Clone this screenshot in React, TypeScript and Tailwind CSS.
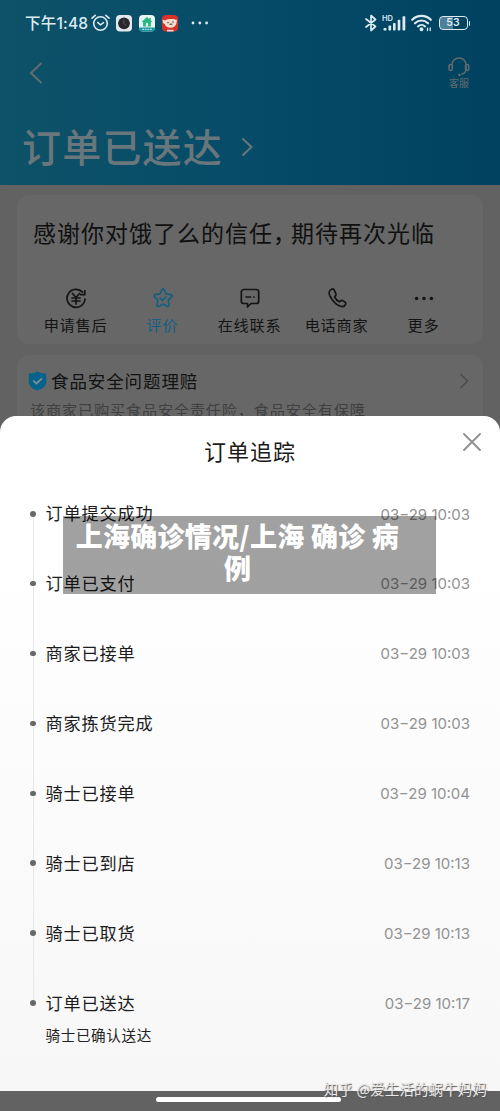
import type { ReactNode } from "react";

type TrackStep = {
    title: string;
    time: string;
    note?: string;
}

const steps: TrackStep[] = [
    { title: "订单提交成功", time: "03−29 10:03" },
    { title: "订单已支付", time: "03−29 10:03" },
    { title: "商家已接单", time: "03−29 10:03" },
    { title: "商家拣货完成", time: "03−29 10:03" },
    { title: "骑士已接单", time: "03−29 10:04" },
    { title: "骑士已到店", time: "03−29 10:13" },
    { title: "骑士已取货", time: "03−29 10:13" },
    { title: "订单已送达", time: "03−29 10:17", note: "骑士已确认送达" },
];

function StatusBar() {
    return (
        <div className="flex h-[46px] items-center pl-[25px] pr-[30px] text-[#dcebf2]">
            <span className="w-[63px] whitespace-nowrap pt-px font-['Inter','Noto_Sans_CJK_SC',sans-serif] text-[15.5px] font-medium leading-none tracking-[0.2px]">下午1:48</span>
            <svg className="ml-[3px]" width="19" height="18" viewBox="0 0 19 18" fill="none" stroke="currentColor" strokeWidth="1.6" strokeLinecap="round">
                <circle cx="9.5" cy="9.5" r="6.8" />
                <path d="M1 4.2 4.2 1.3M18 4.2l-3.2-2.9M6.8 8.6l2.7 2.2 3-2.2" />
            </svg>
            <svg className="ml-[6px]" width="16" height="17" viewBox="0 0 16 17">
                <rect width="16" height="16.5" rx="4" fill="#e4e8ee" />
                <circle cx="8" cy="8.3" r="5.9" fill="#29292d" />
                <path d="M7.8 4.5v4l2.4 2" stroke="#55555a" strokeWidth="1" fill="none" />
            </svg>
            <svg className="ml-[7px]" width="16" height="17" viewBox="0 0 16 17">
                <rect width="16" height="16.5" rx="4" fill="#e7f5f1" />
                <path d="M0 12.5h16a4 4 0 0 1-4 4H4a4 4 0 0 1-4-4z" fill="#1692a0" />
                <path d="M8 2 2.5 7h1.6v4.5h7.8V7h1.6L11.800 5.400V3h-1.500v1.200z" fill="#28b684" />
                <path d="M6.800 11.500V9a1.200 1.200 0 0 1 2.400 0v2.500z" fill="#dff5ee" />
                <path d="M3 14.300h10" stroke="#c5ecec" strokeWidth="1" strokeDasharray="2 .7" />
            </svg>
            <svg className="ml-[7px]" width="16" height="17" viewBox="0 0 16 17">
                <rect width="16" height="16.5" rx="4" fill="#d6322c" />
                <path d="M.5 4.500 3 5.500C4.500 4.300 7 4 9.500 4s3.500.3 4.500 1l1-.5-.6 4c-.8 2.800-3 4.300-6 4.300s-5-1.500-5.500-3.600L1 8z" fill="#f4ddd1" />
                <circle cx="6" cy="7.500" r=".7" fill="#3a2523" />
                <circle cx="11" cy="7" r=".7" fill="#3a2523" />
                <path d="M7.500 9.200h2.800" stroke="#3a2523" strokeWidth="1" />
                <path d="M5 14.800h6.500v1.700H5z" fill="#f6d9d4" />
            </svg>
            <svg className="ml-[13px]" width="18" height="4" viewBox="0 0 18 4" fill="currentColor">
                <circle cx="2" cy="2" r="1.4" />
                <circle cx="8.8" cy="2" r="1.4" />
                <circle cx="15.6" cy="2" r="1.4" />
            </svg>
            <svg className="ml-auto" width="12" height="18" viewBox="0 0 12 18" fill="none" stroke="currentColor" strokeWidth="1.7" strokeLinejoin="round" strokeLinecap="round">
                <path d="m1 5 9.500 7.500L6 16.500v-15l4.500 4L1 13" />
            </svg>
            <svg className="ml-[5px]" width="24" height="18" viewBox="0 0 24 18" fill="currentColor">
                <text x="0" y="6.8" fontSize="7.5" fontWeight="600" fontFamily="Inter, sans-serif">HD</text>
                <rect x="1.5" y="14" width="3" height="2.5" rx=".8" />
                <rect x="6.5" y="11.5" width="2.6" height="5" rx=".8" />
                <rect x="11" y="9" width="2.6" height="7.5" rx=".8" />
                <rect x="15.700" y="5.800" width="2.6" height="10.700" rx=".8" />
                <rect x="20.500" y="2.200" width="2.800" height="14.300" rx=".8" />
            </svg>
            <svg className="ml-[5px]" width="22" height="18" viewBox="0 0 22 18" fill="none" stroke="currentColor" strokeWidth="2.1" strokeLinecap="round">
                <path d="M1.200 5.800c5.200-5.200 13.400-5.200 18.600 0M4 9.300c3.800-3.700 9.200-3.700 13 0M7 12.400c2-1.900 5-1.900 7 0" />
                <circle cx="10.500" cy="15.200" r=".9" fill="currentColor" />
                <path d="M16.500 16.600v-2.400M19.200 14v2.500" strokeWidth="1.300" />
            </svg>
            <div className="ml-[6px] flex items-center">
                <div className="flex h-[14px] w-[29px] items-center justify-center rounded-[4px] border-[1.5px] border-[#dcebf2] bg-linear-to-r from-[#4f7f98] from-50% to-transparent to-50% pt-px font-['Inter',sans-serif] text-[10.5px] font-semibold leading-none">53</div>
                <div className="ml-px h-[5px] w-[1.5px] rounded-r bg-[#dcebf2]" />
            </div>
        </div>
    );
}

function Action({ label, active, children }: { label: string; active?: boolean; children: ReactNode }) {
    return (
        <div className={`flex w-[87px] flex-col items-center ${active ? "text-[#135f84]" : "text-[#141414]"}`}>
            <svg width="22" height="22" viewBox="0 0 22 22" fill="none" stroke="currentColor" strokeWidth="1.7" strokeLinecap="round" strokeLinejoin="round">
                {children}
            </svg>
            <span className="mt-[3px] whitespace-nowrap text-[15.2px] leading-[24px] tracking-[0.7px]">{label}</span>
        </div>
    );
}

function OrderPage() {
    return (
        <div className="h-full bg-[#626262]">
            <header className="h-[185px] bg-linear-to-r from-[#0e5268] via-[#064b68] to-[#004260]">
                <StatusBar />
                <div className="flex h-[54px] items-center justify-between pl-[29px] pr-[30px] text-[#646b6e]">
                    <svg width="14" height="22" viewBox="0 0 14 22" fill="none" stroke="currentColor" strokeWidth="2" strokeLinecap="round">
                        <path d="M12 1.5 2 11l10 9.5" />
                    </svg>
                    <div className="flex w-[22px] flex-col items-center">
                        <svg width="22" height="20" viewBox="0 0 22 20" fill="none" stroke="currentColor" strokeWidth="1.5" strokeLinecap="round">
                            <path d="M4 8C4 3.800 7 1 11 1s7 2.800 7 7v4c0 3.300-1.700 4.500-4 5" />
                            <rect x="1" y="7.5" width="3.3" height="6" rx="1.6" />
                            <rect x="17.5" y="7.5" width="3.3" height="6" rx="1.6" />
                            <circle cx="11.5" cy="18" r=".6" fill="currentColor" />
                        </svg>
                        <span className="whitespace-nowrap text-[10px] leading-[12px]">客服</span>
                    </div>
                </div>
                <div className="flex h-[94px] items-center pl-[22px] text-[#69767b]">
                    <h1 className="mb-[3px] w-[208px] whitespace-nowrap text-[39px] font-medium leading-none tracking-[1.2px]">订单已送达</h1>
                    <svg className="ml-[11px]" width="14" height="20" viewBox="0 0 14 20" fill="none" stroke="currentColor" strokeWidth="2" strokeLinecap="round">
                        <path d="m2 2 8.500 8L2 18" />
                    </svg>
                </div>
            </header>

            <section className="mx-[17px] mt-[10px] h-[149px] rounded-[12px] bg-[#676767]">
                <div className="flex h-[76px] items-center pb-[2px] pl-[16px]">
                    <h2 className="whitespace-nowrap text-[23px] leading-none tracking-[1px] text-[#101010]">感谢你对饿了么的信任<span className="tracking-[-5px]">，</span>期待再次光临</h2>
                </div>
                <div className="ml-[15px] flex pt-[16px]">
                    <Action label="申请售后">
                        <path d="M17.600 5.200A9 9 0 1 0 20 12M19.800 3.500v4.200h-4M7.500 6.500l3.500 4 3.500-4M7 11h8M7 14h8M11 11v6" />
                    </Action>
                    <Action label="评价" active>
                        <path d="M10 2.500c.4-.9 1.600-.9 2 0l2.100 4.400 4.900.8c1 .2 1.300 1.200.7 1.900l-3.500 3.600.8 5c.2 1-.8 1.600-1.600 1.200L11 17.100l-4.400 2.300c-.8.4-1.800-.2-1.600-1.200l.8-5-3.500-3.600c-.6-.7-.3-1.700.7-1.900l4.900-.8zM8 11l2.500 2.300L14 10" />
                    </Action>
                    <Action label="在线联系">
                        <path d="M4.800 2.500h12.400a2.500 2.500 0 0 1 2.500 2.500v9a2.500 2.500 0 0 1-2.500 2.500H12L8.500 20v-3.500H4.800A2.500 2.500 0 0 1 2.300 14V5a2.500 2.500 0 0 1 2.500-2.500zM7 10h4.500M14.800 10h.2" />
                    </Action>
                    <Action label="电话商家">
                        <path d="M5.700 2.200 3.800 3.700c-3 3.300 5.200 14.600 11.700 15.800 2 .3 3.600-.9 4.200-2.300.3-.8 0-1.500-.6-2l-2.500-1.600c-.7-.4-1.400-.3-2 .2l-1.200 1c-2-.9-3.900-3-4.800-5l1.200-1.400c.4-.6.4-1.200 0-1.800L8.100 2.800c-.6-.9-1.600-1.200-2.400-.6z" />
                    </Action>
                    <Action label="更多">
                        <g fill="currentColor" stroke="none">
                            <circle cx="3.6" cy="11.500" r="1.8" />
                            <circle cx="11" cy="11.500" r="1.8" />
                            <circle cx="18.400" cy="11.500" r="1.8" />
                        </g>
                    </Action>
                </div>
            </section>

            <section className="mx-[17px] mt-[11px] h-[90px] rounded-[12px] bg-[#676767] pl-[11px] pr-[14px] pt-[14px]">
                <div className="flex h-[24px] items-center">
                    <svg width="19" height="20" viewBox="0 0 18 20" preserveAspectRatio="none" fill="none">
                        <path d="M9 .5c2.500 1.400 5 2 8.300 2v8c0 4.400-3.300 7.500-8.300 9-5-1.500-8.300-4.600-8.300-9v-8C4 2.500 6.500 1.900 9 .5z" fill="#05638b" />
                        <path d="m5 9.500 3 3 5.300-5.200" stroke="#858e92" strokeWidth="1.7" />
                    </svg>
                    <span className="ml-[4px] whitespace-nowrap text-[17.5px] leading-none tracking-[0.9px] text-[#121212]">食品安全问题理赔</span>
                    <svg className="ml-auto" width="10" height="16" viewBox="0 0 10 16" fill="none" stroke="#4a4a4a" strokeWidth="1.4">
                        <path d="m1.500 1 7 7-7 7" />
                    </svg>
                </div>
                <p className="mt-[5px] whitespace-nowrap pl-[2px] text-[15.2px] leading-[22px] tracking-[0.8px] text-[#404040]">该商家已购买食品安全责任险，食品安全有保障</p>
            </section>
        </div>
    );
}

function Step({ step, last }: { step: TrackStep; last: boolean }) {
    return (
        <li className="flex h-[69.9px]">
            <div className="flex w-[7px] flex-col items-center">
                <div className="mt-[9px] size-[5.5px] shrink-0 rounded-full bg-[#686868]" />
                {!last && <div className="-mb-[9px] w-px grow bg-[#e8e8e8]" />}
            </div>
            <div className="ml-[9px] grow">
                <div className="flex h-[24px] items-center justify-between">
                    <span className="mb-[2px] whitespace-nowrap text-[17.2px] leading-none tracking-[0.8px] text-[#1c1c1c]">{step.title}</span>
                    <span className="whitespace-nowrap font-['Inter',sans-serif] text-[15px] leading-none text-[#929292]">{step.time}</span>
                </div>
                {step.note && <p className="mt-[9px] whitespace-nowrap text-[14.6px] leading-[22px] tracking-[0.6px] text-[#222]">{step.note}</p>}
            </div>
        </li>
    );
}

function TrackingSheet() {
    return (
        <div className="absolute inset-x-0 top-[416px] h-[675px] rounded-t-[16px] bg-linear-to-b from-white from-20% to-[#f7f7f7]">
            <div className="grid h-[71px] grid-cols-[1fr_auto_1fr] items-center">
                <h3 className="col-start-2 mb-[4px] whitespace-nowrap text-[22px] leading-none tracking-[1px] text-[#1a1a1a]">订单追踪</h3>
                <svg className="mb-[20px] mr-[19px] justify-self-end" width="18" height="18" viewBox="0 0 18 18" stroke="#8e8e8e" strokeWidth="1.8" strokeLinecap="round">
                    <path d="m1 1 16 16M17 1 1 17" />
                </svg>
            </div>
            <ul className="pl-[29.5px] pr-[30px] pt-[15px]">
                {steps.map((step, i) => <Step key={step.title} step={step} last={i === steps.length - 1} />)}
            </ul>
        </div>
    );
}

export default function App() {
    return (
        <main className="relative h-[1111px] w-[500px] overflow-hidden bg-[#646464] font-['Noto_Sans_CJK_SC',sans-serif]">
            <OrderPage />
            <TrackingSheet />
            <div className="absolute left-[63px] top-[516px] h-[78px] w-[373px] bg-black/37 pr-[24px] pt-[4px] text-center text-[27px] font-black leading-[32px] tracking-[0.25px] text-white">
                上海确诊情况/上海 确诊 病<br />例
            </div>
            <div className="absolute left-[156px] top-[1097px] h-[5px] w-[185px] rounded-full bg-white" />
            <div className="absolute right-[13px] top-[1079px] whitespace-nowrap text-[14.5px] leading-[20px] tracking-[0.1px] text-[#e8e8e8] [text-shadow:1px_1px_1px_#555]">知乎 @爱生活的蜗牛妈妈</div>
        </main>
    );
}
